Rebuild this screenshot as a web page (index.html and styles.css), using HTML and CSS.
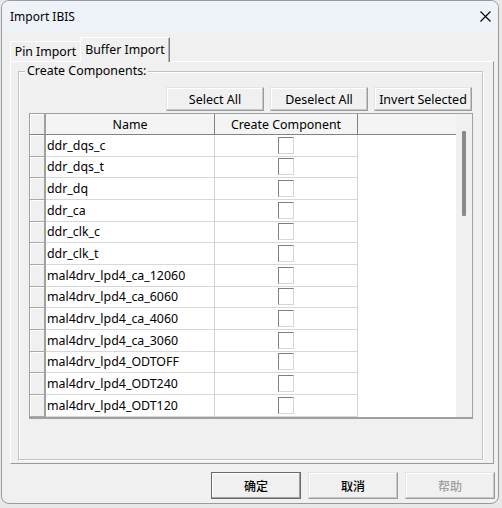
FILE: index.html
```html
<!DOCTYPE html>
<html lang="en">
<head>
<meta charset="utf-8">
<title>Import IBIS</title>
<link rel="stylesheet" href="styles.css">
</head>
<body>
<div class="window">
  <div class="titlebar">
    <span class="title">Import IBIS</span>
    <svg class="close" width="11" height="11" viewBox="0 0 11 11"><path d="M0.5 0.5 L10.5 10.5 M10.5 0.5 L0.5 10.5" stroke="#000" stroke-width="1.1" fill="none"/></svg>
  </div>
  <div class="client">
    <div class="tabs">
      <div class="tab">Pin Import</div>
      <div class="tab active">Buffer Import</div>
    </div>
    <div class="panel">
      <div class="group">
        <div class="group-label">Create Components:</div>
        <div class="actions">
          <button class="btn">Select All</button>
          <button class="btn">Deselect All</button>
          <button class="btn">Invert Selected</button>
        </div>
        <div class="grid">
          <div class="grid-main">
            <div class="row head">
              <div class="c rh"></div>
              <div class="c name">Name</div>
              <div class="c create">Create Component</div>
              <div class="c fill"></div>
            </div>
            <div class="row"><div class="c rh"></div><div class="c name">ddr_dqs_c</div><div class="c create"><span class="cb"></span></div></div>
            <div class="row"><div class="c rh"></div><div class="c name">ddr_dqs_t</div><div class="c create"><span class="cb"></span></div></div>
            <div class="row"><div class="c rh"></div><div class="c name">ddr_dq</div><div class="c create"><span class="cb"></span></div></div>
            <div class="row"><div class="c rh"></div><div class="c name">ddr_ca</div><div class="c create"><span class="cb"></span></div></div>
            <div class="row"><div class="c rh"></div><div class="c name">ddr_clk_c</div><div class="c create"><span class="cb"></span></div></div>
            <div class="row"><div class="c rh"></div><div class="c name">ddr_clk_t</div><div class="c create"><span class="cb"></span></div></div>
            <div class="row"><div class="c rh"></div><div class="c name">mal4drv_lpd4_ca_12060</div><div class="c create"><span class="cb"></span></div></div>
            <div class="row"><div class="c rh"></div><div class="c name">mal4drv_lpd4_ca_6060</div><div class="c create"><span class="cb"></span></div></div>
            <div class="row"><div class="c rh"></div><div class="c name">mal4drv_lpd4_ca_4060</div><div class="c create"><span class="cb"></span></div></div>
            <div class="row"><div class="c rh"></div><div class="c name">mal4drv_lpd4_ca_3060</div><div class="c create"><span class="cb"></span></div></div>
            <div class="row"><div class="c rh"></div><div class="c name">mal4drv_lpd4_ODTOFF</div><div class="c create"><span class="cb"></span></div></div>
            <div class="row"><div class="c rh"></div><div class="c name">mal4drv_lpd4_ODT240</div><div class="c create"><span class="cb"></span></div></div>
            <div class="row"><div class="c rh"></div><div class="c name">mal4drv_lpd4_ODT120</div><div class="c create"><span class="cb"></span></div></div>
          </div>
          <div class="vscroll"><div class="thumb"></div></div>
        </div>
      </div>
    </div>
    <div class="footer">
      <button class="btn big default">确定</button>
      <button class="btn big">取消</button>
      <button class="btn big disabled">帮助</button>
    </div>
  </div>
</div>
</body>
</html>
```

FILE: styles.css
```css
html, body {
  margin: 0;
  padding: 0;
}
body {
  padding-left: 1px;
  background: #e8e8e8;
  font-family: "Noto Sans", "Noto Sans CJK SC", sans-serif;
  font-size: 12px;
  color: #000;
}
.window {
  width: 498px;
  height: 504px;
  box-sizing: border-box;
  border: 1px solid #9a9a9a;
  border-radius: 8px;
  overflow: hidden;
  background: #f0f0f0;
  display: flex;
  flex-direction: column;
}
.titlebar {
  height: 30px;
  flex: none;
  background: #eef2f9;
  display: flex;
  align-items: center;
  justify-content: space-between;
  padding: 0 7px 0 8px;
}
.title {
  font-size: 12px;
}
.close {
  display: block;
  margin-top: 1px;
}
.client {
  flex: 1;
  display: flex;
  flex-direction: column;
}
.tabs {
  display: flex;
  align-items: flex-end;
  height: 24px;
  margin: 6px 0 0 8px;
  position: relative;
  z-index: 1;
}
.tab {
  box-sizing: border-box;
  width: 70px;
  height: 20px;
  border-top: 1px solid #fff;
  border-left: 1px solid #fff;
  display: flex;
  align-items: center;
  justify-content: center;
  font-size: 12.3px;
  background: #f0f0f0;
}
.tab.active {
  width: 90px;
  height: 25px;
  margin-bottom: -1px;
  border-right: 1px solid #7a7a7a;
  box-shadow: inset -1px 0 #b4b4b4;
  padding-bottom: 1px;
}
.panel {
  box-sizing: border-box;
  margin-left: 8px;
  width: 484px;
  height: 403px;
  flex: none;
  border-top: 1px solid #fff;
  border-left: 1px solid #fff;
  border-right: 1px solid #9a9a9a;
  border-bottom: 1px solid #9a9a9a;
}
.group {
  box-sizing: border-box;
  margin: 9px 0 0 7px;
  width: 465px;
  height: 389px;
  border: 1px solid #c2c2c2;
  box-shadow: inset 1px 1px #fff, 1px 1px #fff;
}
.group-label {
  width: max-content;
  margin: -9px 0 0 6px;
  padding: 0 2px;
  line-height: 16px;
  font-size: 12.4px;
  background: #f0f0f0;
}
.actions {
  display: flex;
  justify-content: flex-end;
  gap: 6px;
  margin: 8px 10px 0 0;
}
.btn {
  box-sizing: border-box;
  width: 98px;
  height: 24px;
  margin: 0;
  padding: 0;
  font-family: inherit;
  font-size: 12.5px;
  color: #000;
  background: #f0f0f0;
  border: 1px solid;
  border-color: #e4e4e4 #9a9a9a #9a9a9a #e4e4e4;
  box-shadow: inset -1px -1px #c8c8c8, inset 1px 1px #fff;
  border-radius: 0;
}
.grid {
  display: flex;
  margin: 2px 9px 0 10px;
  border: 1px solid #a0a0a0;
  border-bottom-width: 2px;
  font-size: 12.4px;
}
.grid-main {
  width: 426px;
  background: #fff;
  display: flex;
  flex-direction: column;
}
.row {
  display: flex;
  height: 21.667px;
  flex: none;
}
.row.head {
  height: 21px;
}
.c {
  box-sizing: border-box;
  height: 100%;
  display: flex;
  align-items: center;
  white-space: nowrap;
}
.rh {
  width: 16px;
  background: #f0f0f0;
  border-right: 2px solid #a0a0a0;
  border-bottom: 1px solid #a8a8a8;
  box-shadow: inset 1px 1px #fff;
}
.name {
  width: 169px;
  padding-left: 1px;
  border-right: 1px solid #d4d4d4;
  border-bottom: 1px solid #d8d8d8;
}
.create {
  width: 143px;
  justify-content: center;
  border-right: 1px solid #d4d4d4;
  border-bottom: 1px solid #d8d8d8;
}
.head .c {
  background: #f4f4f4;
  border-bottom: 1px solid #828282;
}
.head .rh {
  background: #f0f0f0;
}
.head .name,
.head .create {
  justify-content: center;
  padding-left: 0;
  border-right: 1px solid #828282;
}
.fill {
  width: 98px;
}
.cb {
  display: block;
  box-sizing: border-box;
  width: 16px;
  height: 17px;
  background: #fff;
  border: 1px solid;
  border-color: #808080 #d6d6d6 #d6d6d6 #808080;
}
.vscroll {
  width: 16px;
  background: #f0f0f0;
}
.thumb {
  width: 4px;
  height: 85px;
  margin: 17px 0 0 6px;
  background: #8a8a8a;
  border-radius: 1px;
}
.footer {
  display: flex;
  justify-content: flex-end;
  gap: 7px;
  margin-top: 8px;
  padding-right: 3px;
}
.btn.big {
  width: 90px;
  height: 27px;
  font-family: "Noto Sans CJK SC", sans-serif;
  font-size: 12px;
  font-weight: 500;
}
.btn.default {
  border-color: #6a6a6a;
  box-shadow: inset -1px -1px #a0a0a0, inset 1px 1px #fff;
}
.btn.disabled {
  color: #a0a0a0;
}
```
